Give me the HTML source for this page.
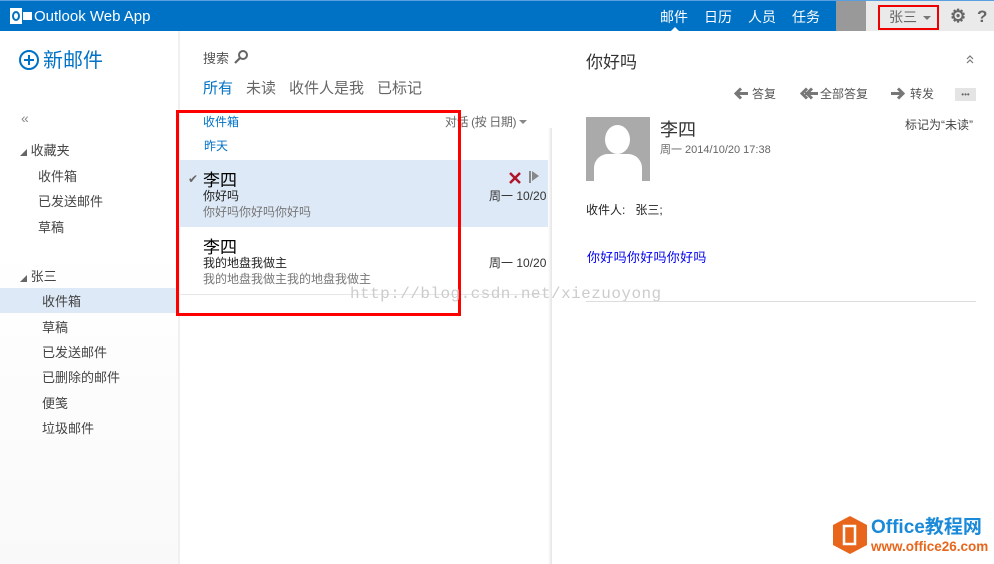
<!DOCTYPE html>
<html><head><meta charset="utf-8"><style>
*{margin:0;padding:0;box-sizing:border-box}
body{width:994px;height:564px;overflow:hidden;background:#fff;font-family:"Liberation Sans","Noto Sans CJK SC",sans-serif;position:relative;color:#333}
.a{position:absolute;white-space:nowrap;line-height:1}
.top{position:absolute;left:0;top:0;width:994px;height:31px;background:#0072c6}
.f{font-size:13px;color:#444}
</style></head><body>
<div class="top"></div>
<div class="a" style="left:836px;top:0;width:30px;height:31px;background:#999"></div>
<div class="a" style="left:866px;top:0;width:128px;height:31px;background:#eaeaea"></div>
<div class="a" style="left:0;top:0;width:994px;height:1px;background:#5aa0e0"></div>
<!-- logo -->
<svg class="a" style="left:10px;top:8px" width="22" height="16"><rect x="0" y="0" width="12" height="16" fill="#fff"/><ellipse cx="6" cy="8" rx="3" ry="4" fill="none" stroke="#0072c6" stroke-width="2"/><rect x="13" y="4" width="9" height="8" fill="#fff"/></svg>
<div class="a" style="left:34px;top:9px;font-size:15px;color:#fff">Outlook Web App</div>
<div class="a" style="left:660px;top:10px;font-size:14px;color:#fff">邮件</div>
<div class="a" style="left:671px;top:27px;width:0;height:0;border:4px solid transparent;border-bottom-color:#fff;border-top:0"></div>
<div class="a" style="left:704px;top:10px;font-size:14px;color:#fff">日历</div>
<div class="a" style="left:748px;top:10px;font-size:14px;color:#fff">人员</div>
<div class="a" style="left:792px;top:10px;font-size:14px;color:#fff">任务</div>
<div class="a" style="left:878px;top:5px;width:61px;height:25px;border:2px solid #e00"></div>
<div class="a" style="left:889px;top:10px;font-size:14px;color:#666">张三</div>
<div class="a" style="left:923px;top:16px;border:4px solid transparent;border-top:4px solid #777"></div>
<div class="a" style="left:950px;top:7px;font-size:18px;color:#666;font-weight:bold">⚙</div>
<div class="a" style="left:977px;top:8px;font-size:17px;color:#666;font-weight:bold">?</div>
<!-- sidebar -->
<div class="a" style="left:0;top:31px;width:178px;height:533px;background:linear-gradient(#fff 40%,#f9f9f9)"></div>
<div class="a" style="left:178px;top:31px;width:2px;height:533px;background:#f0f0f0"></div>
<div class="a" style="left:19px;top:50px;width:20px;height:20px;border:2px solid #0072c6;border-radius:50%"></div>
<div class="a" style="left:24px;top:59px;width:10px;height:2px;background:#0072c6"></div>
<div class="a" style="left:28px;top:55px;width:2px;height:10px;background:#0072c6"></div>
<div class="a" style="left:43px;top:51px;font-size:20px;color:#0072c6">新邮件</div>
<div class="a" style="left:21px;top:111px;font-size:14px;color:#888">«</div>
<div class="a f" style="left:20px;top:144px"><span style="font-size:7px;color:#666">◢</span> 收藏夹</div>
<div class="a f" style="left:38px;top:170px">收件箱</div>
<div class="a f" style="left:38px;top:195px">已发送邮件</div>
<div class="a f" style="left:38px;top:221px">草稿</div>
<div class="a f" style="left:20px;top:270px"><span style="font-size:7px;color:#666">◢</span> 张三</div>
<div class="a" style="left:0;top:288px;width:176px;height:25px;background:#dde9f6"></div>
<div class="a f" style="left:42px;top:295px">收件箱</div>
<div class="a f" style="left:42px;top:321px">草稿</div>
<div class="a f" style="left:42px;top:346px">已发送邮件</div>
<div class="a f" style="left:42px;top:371px">已删除的邮件</div>
<div class="a f" style="left:42px;top:397px">便笺</div>
<div class="a f" style="left:42px;top:422px">垃圾邮件</div>
<!-- middle -->
<div class="a" style="left:203px;top:52px;font-size:13px;color:#555">搜索</div>
<svg class="a" style="left:233px;top:49px" width="16" height="16"><circle cx="10" cy="6" r="4" fill="none" stroke="#666" stroke-width="2"/><line x1="7" y1="9" x2="2" y2="14" stroke="#666" stroke-width="2.2"/></svg>
<div class="a" style="left:203px;top:81px;font-size:15px;color:#0072c6">所有</div>
<div class="a" style="left:246px;top:81px;font-size:15px;color:#666">未读</div>
<div class="a" style="left:289px;top:81px;font-size:15px;color:#666">收件人是我</div>
<div class="a" style="left:377px;top:81px;font-size:15px;color:#666">已标记</div>
<div class="a" style="left:203px;top:116px;font-size:12px;color:#0072c6">收件箱</div>
<div class="a" style="left:445px;top:116px;font-size:12px;color:#666;letter-spacing:-0.4px">对话 (按 日期)</div>
<div class="a" style="left:519px;top:120px;border:4px solid transparent;border-top:4px solid #888"></div>
<div class="a" style="left:204px;top:140px;font-size:12px;color:#0072c6">昨天</div>
<div class="a" style="left:180px;top:160px;width:370px;height:67px;background:#dde9f6"></div>
<div class="a" style="left:188px;top:173px;font-size:12px;color:#666">✔</div>
<div class="a" style="left:203px;top:172px;font-size:17px;color:#000">李四</div>
<div class="a" style="left:203px;top:190px;font-size:12px;color:#222">你好吗</div>
<div class="a" style="left:203px;top:206px;font-size:12px;color:#777">你好吗你好吗你好吗</div>
<svg class="a" style="left:509px;top:172px" width="12" height="12"><path d="M1 1L11 11M11 1L1 11" stroke="#b0142a" stroke-width="2.5"/></svg>
<div class="a" style="left:529px;top:171px;width:2px;height:12px;background:#888"></div>
<div class="a" style="left:532px;top:171px;border:5px solid transparent;border-left:7px solid #888;border-right:0"></div>
<div class="a" style="left:489px;top:190px;font-size:12px;color:#333">周一 10/20</div>
<div class="a" style="left:203px;top:239px;font-size:17px;color:#000">李四</div>
<div class="a" style="left:203px;top:257px;font-size:12px;color:#222">我的地盘我做主</div>
<div class="a" style="left:203px;top:273px;font-size:12px;color:#777">我的地盘我做主我的地盘我做主</div>
<div class="a" style="left:489px;top:257px;font-size:12px;color:#333">周一 10/20</div>
<div class="a" style="left:180px;top:294px;width:370px;height:1px;background:#e6e6e6"></div>
<div class="a" style="left:176px;top:110px;width:285px;height:206px;border:3px solid #f00"></div>
<div class="a" style="left:548px;top:128px;width:4px;height:436px;background:linear-gradient(90deg,#fff,#e4e4e4)"></div>
<div class="a" style="left:350px;top:286px;font-family:'Liberation Mono',monospace;font-size:16px;color:#ccc;letter-spacing:0.45px">http://blog.csdn.net/xiezuoyong</div>
<!-- reading -->
<div class="a" style="left:586px;top:54px;font-size:17px;color:#333">你好吗</div>
<svg class="a" style="left:965px;top:54px" width="10" height="10"><path d="M2 5L5 2L8 5M2 9L5 6L8 9" fill="none" stroke="#777" stroke-width="1.2"/></svg>
<svg class="a" style="left:733px;top:87px" width="16" height="13"><path d="M15 6.5H4M8 1.5L3 6.5L8 11.5" fill="none" stroke="#777" stroke-width="3"/></svg>
<div class="a" style="left:752px;top:88px;font-size:12px;color:#555">答复</div>
<svg class="a" style="left:799px;top:87px" width="20" height="13"><path d="M19 6.5H6M8 1.5L3 6.5L8 11.5M13 1.5L8 6.5L13 11.5" fill="none" stroke="#777" stroke-width="3"/></svg>
<div class="a" style="left:820px;top:88px;font-size:12px;color:#555">全部答复</div>
<svg class="a" style="left:890px;top:87px" width="16" height="13"><path d="M1 6.5H12M8 1.5L13 6.5L8 11.5" fill="none" stroke="#777" stroke-width="3"/></svg>
<div class="a" style="left:910px;top:88px;font-size:12px;color:#555">转发</div>
<div class="a" style="left:955px;top:88px;width:21px;height:13px;background:#e4e4e4;font-size:8px;color:#666;text-align:center;line-height:13px">•••</div>
<div class="a" style="left:586px;top:117px;width:64px;height:64px;background:#aaa;overflow:hidden">
<div style="position:absolute;left:19px;top:8px;width:25px;height:29px;border-radius:50%;background:#fff"></div>
<div style="position:absolute;left:8px;top:37px;width:48px;height:40px;border-radius:14px 14px 0 0;background:#fff"></div></div>
<div class="a" style="left:660px;top:121px;font-size:18px;color:#333">李四</div>
<div class="a" style="left:660px;top:145px;font-size:11px;color:#666">周一 2014/10/20 17:38</div>
<div class="a" style="left:905px;top:119px;font-size:12px;color:#444">标记为“未读”</div>
<div class="a" style="left:586px;top:204px;font-size:12px;color:#222">收件人:&nbsp;&nbsp; 张三;</div>
<div class="a" style="left:587px;top:251px;font-size:13px;color:#0000ee;letter-spacing:0.3px">你好吗你好吗你好吗</div>
<div class="a" style="left:586px;top:301px;width:390px;height:1px;background:#ddd"></div>
<!-- office logo -->
<svg class="a" style="left:832px;top:515px" width="36" height="40"><polygon points="18,1 35,10 35,30 18,39 1,30 1,10" fill="#e8661c"/><rect x="12" y="11" width="11" height="18" fill="none" stroke="#fff" stroke-width="2.5"/></svg>
<div class="a" style="left:871px;top:518px;font-size:19px;font-weight:bold;color:#1a8ad8">Office教程网</div>
<div class="a" style="left:871px;top:540px;font-size:13.5px;font-weight:bold;color:#e8661c">www.office26.com</div>
</body></html>
